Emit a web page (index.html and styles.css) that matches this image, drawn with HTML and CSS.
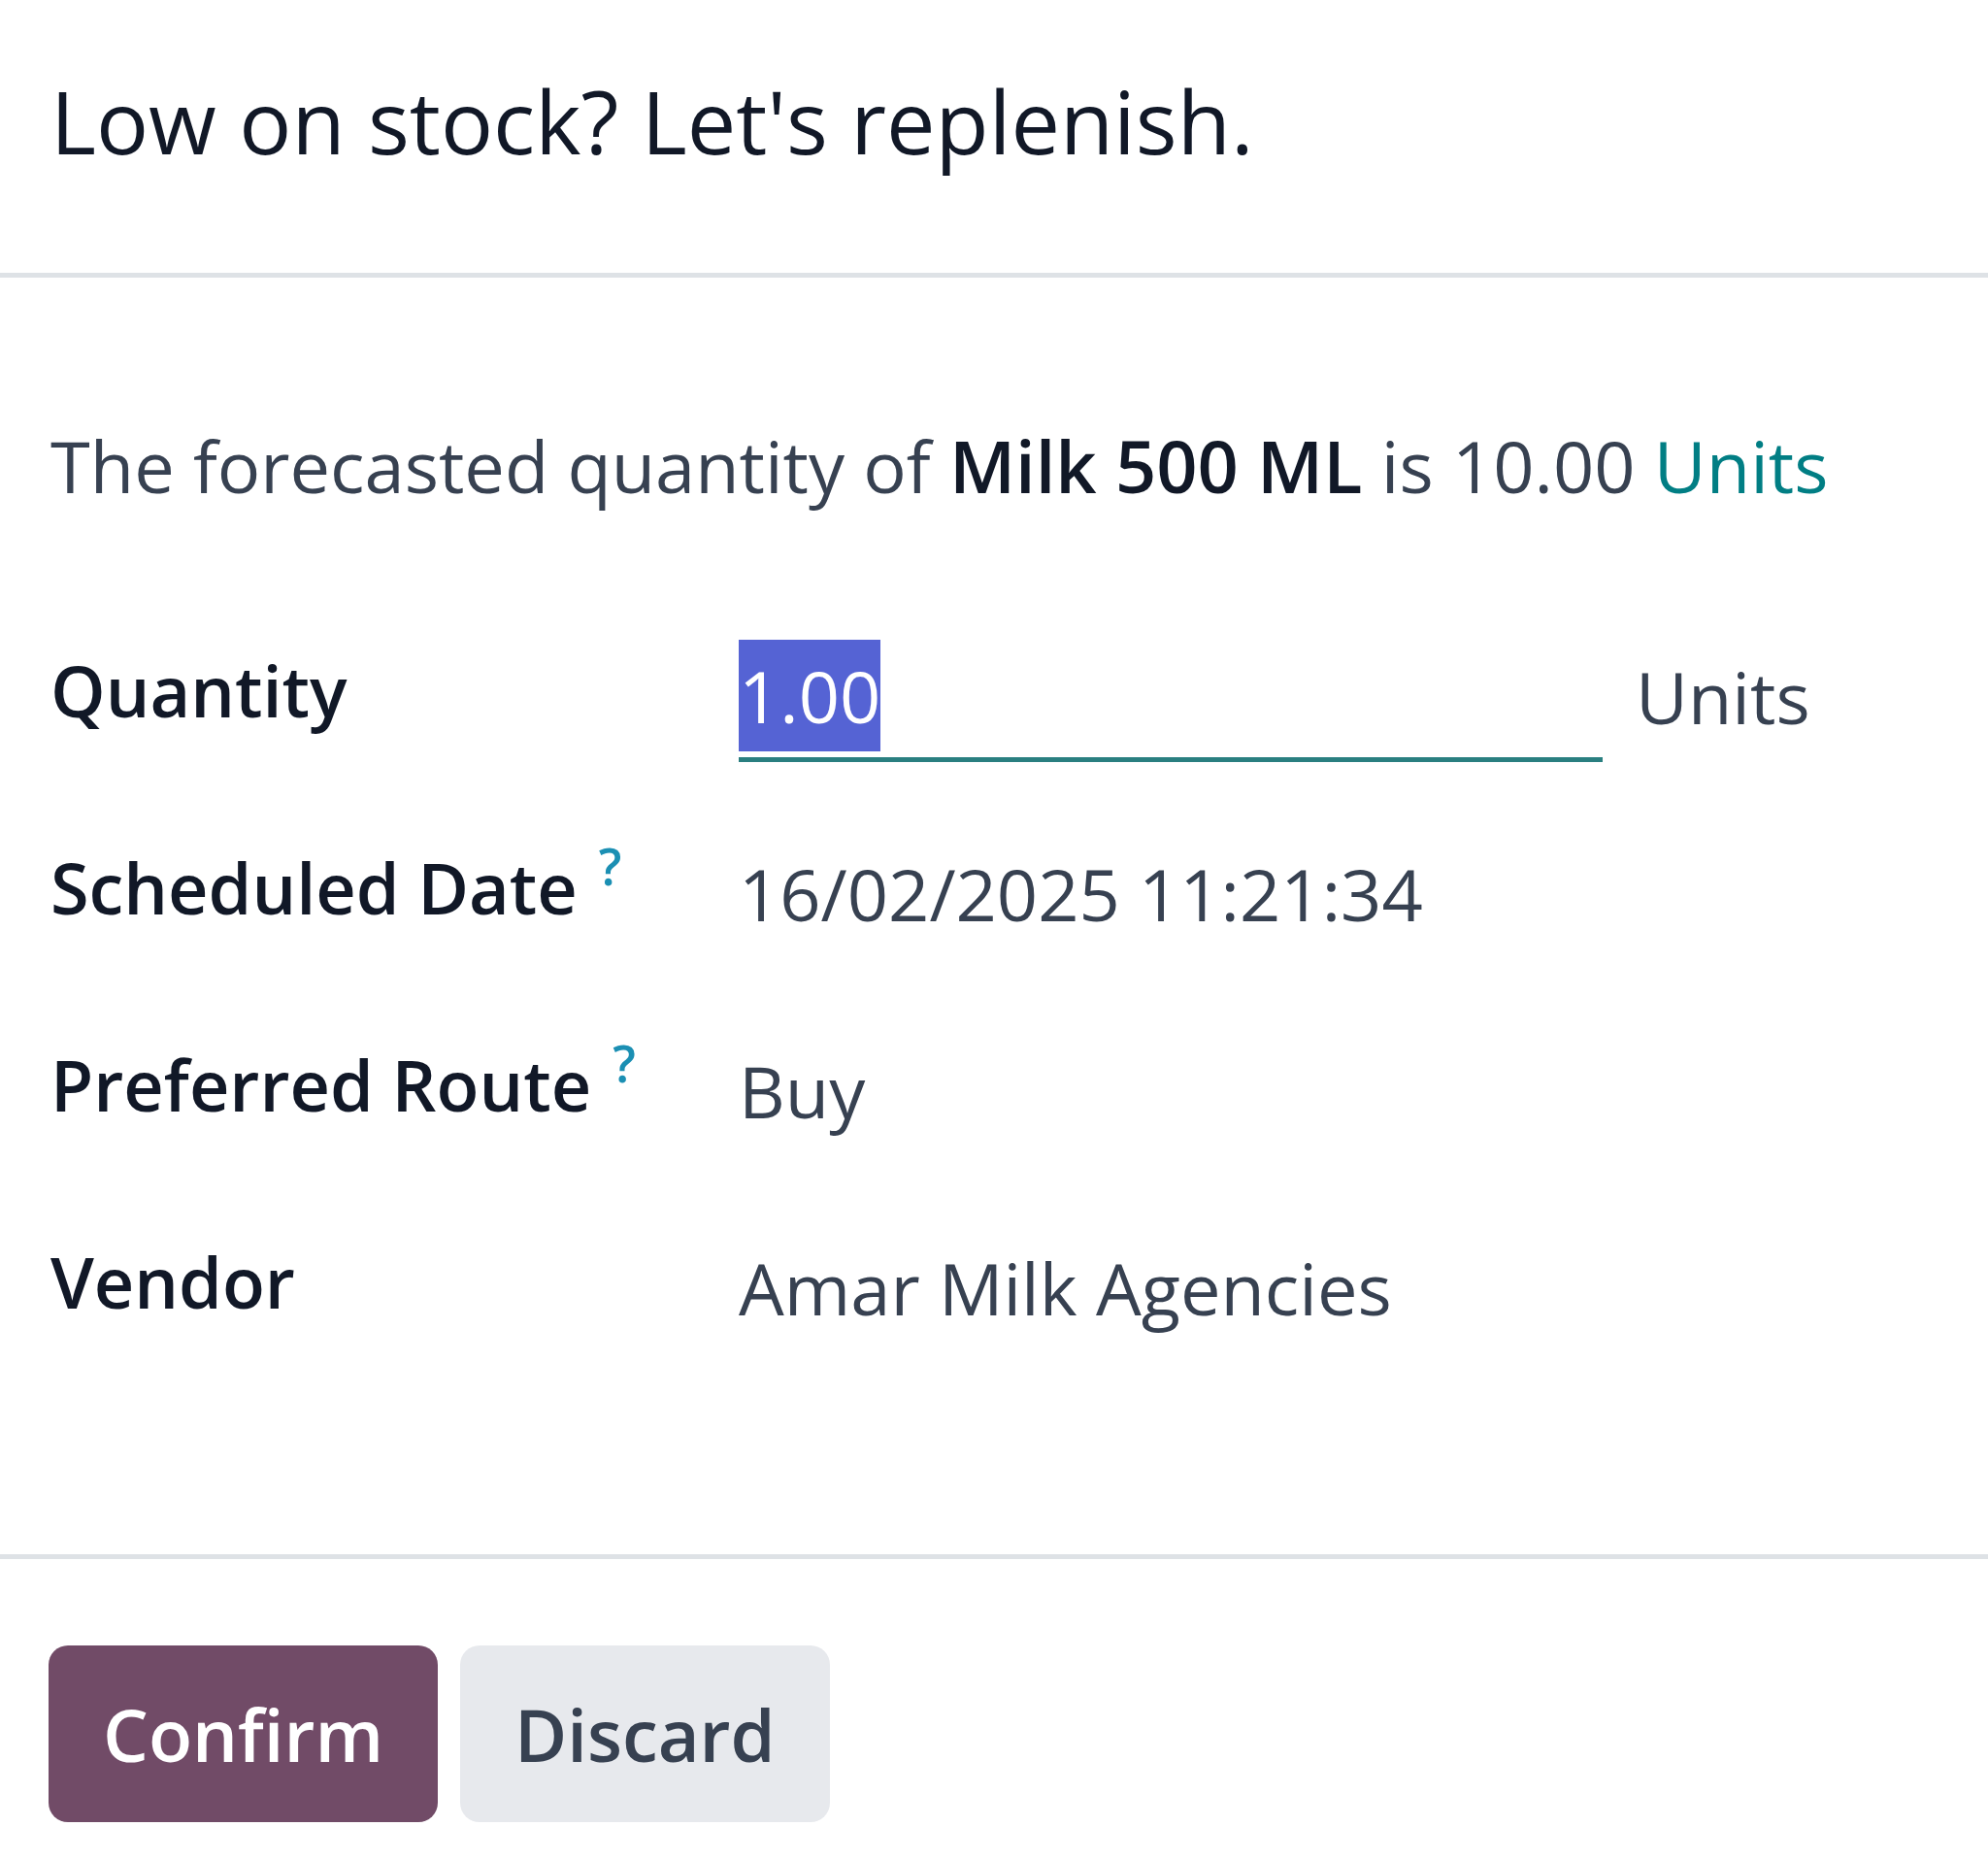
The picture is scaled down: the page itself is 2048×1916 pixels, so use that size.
FILE: index.html
```html
<!DOCTYPE html>
<html lang="en">
<head>
<meta charset="utf-8">
<title>Low on stock? Let's replenish.</title>
<link rel="stylesheet" href="styles.css">
</head>
<body>
<div class="modal">
  <header class="modal-header">
    <h4 class="modal-title">Low on stock? Let's replenish.</h4>
  </header>
  <main class="modal-body">
    <p class="forecast">The forecasted quantity of <strong>Milk 500 ML</strong> is 10.00 <a class="link">Units</a></p>
    <div class="form">
      <div class="label">Quantity</div>
      <div class="value qty">
        <div class="input"><span class="sel">1.00</span></div>
        <span class="uom">Units</span>
      </div>
      <div class="label">Scheduled Date<sup class="help">?</sup></div>
      <div class="value">16/02/2025 11:21:34</div>
      <div class="label">Preferred Route<sup class="help">?</sup></div>
      <div class="value">Buy</div>
      <div class="label">Vendor</div>
      <div class="value">Amar Milk Agencies</div>
    </div>
  </main>
  <footer class="modal-footer">
    <button class="btn btn-primary">Confirm</button>
    <button class="btn btn-secondary">Discard</button>
  </footer>
</div>
</body>
</html>
```
FILE: styles.css
```css
html, body {
  margin: 0;
  padding: 0;
  background: #ffffff;
}
body {
  font-family: "Open Sans", "Noto Sans", sans-serif;
  color: #374151;
  font-size: 74px;
  line-height: 1.5;
}
.modal {
  width: 2048px;
  height: 1916px;
  display: flex;
  flex-direction: column;
}
.modal-header {
  padding: 70px 52px 0;
  height: 211px;
  border-bottom: 5px solid #dee2e6;
}
.modal-title {
  margin: 0;
  font-size: 90px;
  font-weight: 500;
  line-height: 1.2;
  color: #111827;
}
.modal-body {
  padding: 138px 52px 0;
  height: 1320px;
  box-sizing: border-box;
  border-bottom: 5px solid #dee2e6;
}
.forecast {
  margin: 0 0 122px;
}
.forecast strong {
  font-weight: 600;
  color: #111827;
}
.link {
  color: #017e84;
}
.form {
  display: grid;
  grid-template-columns: 709px 1fr;
  grid-auto-rows: 203px;
}
.label {
  font-weight: 600;
  font-size: 72px;
  color: #111827;
}
.help {
  font-size: 52px;
  font-weight: 600;
  color: #1b8fb3;
  margin-left: 22px;
  vertical-align: top;
  line-height: 1;
  position: relative;
  top: 6px;
}
.value {
  padding-top: 5px;
}
.qty {
  display: flex;
  align-items: flex-start;
  padding-top: 0;
}
.input {
  width: 890px;
  height: 123px;
  border-bottom: 5px solid #2a7f80;
  box-sizing: content-box;
}
.sel {
  display: inline-block;
  background: #5563d4;
  color: #ffffff;
  line-height: 115px;
  height: 115px;
  margin-top: 2px;
}
.uom {
  margin-left: 34px;
  padding-top: 5px;
}
.modal-footer {
  padding: 89px 50px 0;
  display: flex;
  gap: 23px;
}
.btn {
  font-family: inherit;
  font-size: 74px;
  font-weight: 600;
  height: 182px;
  padding: 0 56px;
  border: none;
  border-radius: 20px;
}
.btn-primary {
  background: #714b67;
  color: #ffffff;
}
.btn-secondary {
  background: #e7e9ed;
  color: #374151;
}
```
